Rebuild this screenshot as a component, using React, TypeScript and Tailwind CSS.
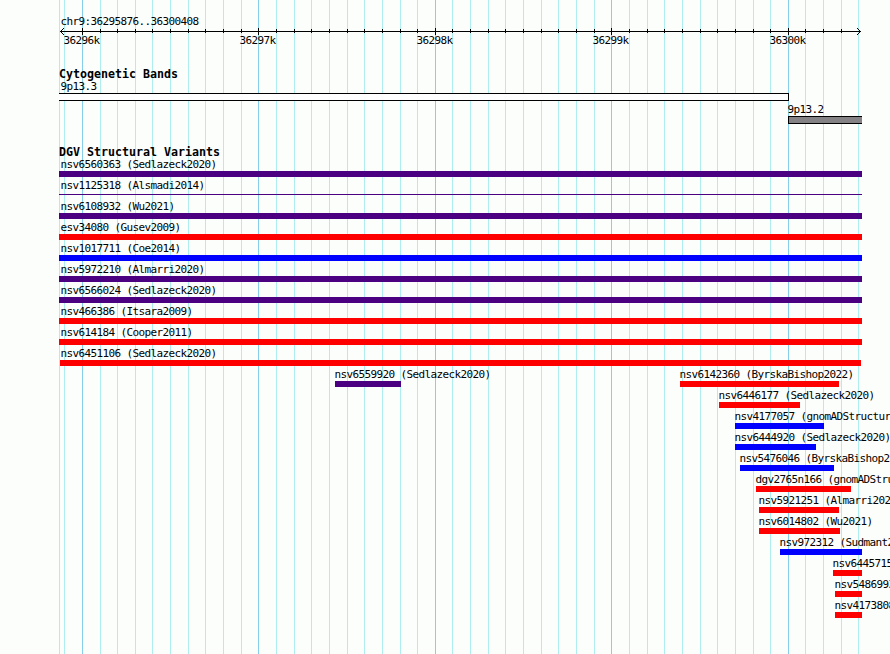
const LEFT = 59;
const RIGHT = 862;

const MAJOR = [82, 258, 435, 611, 788];
const MINOR = [
  64, 100, 117, 135, 152, 170, 188, 205, 223, 241,
  276, 294, 311, 329, 347, 364, 382, 400, 417,
  452, 470, 488, 505, 523, 541, 558, 576, 594,
  629, 647, 664, 682, 700, 717, 735, 753, 770,
  805, 823, 841, 858,
];

const TICK_LABELS = [
  { x: 64, text: "36296k" },
  { x: 240, text: "36297k" },
  { x: 417, text: "36298k" },
  { x: 593, text: "36299k" },
  { x: 770, text: "36300k" },
];

type Kind = "gain" | "loss" | "complex";

interface Variant {
  name: string;
  kind: Kind;
  start?: number;
  end?: number;
  thin?: boolean;
}

const COLORS: Record<Kind, string> = {
  gain: "bg-[#0000ff]",
  loss: "bg-[#ff0000]",
  complex: "bg-[#4b0082]",
};

// One entry per track row; variants that don't collide share a row
const ROWS: Variant[][] = [
  [{ name: "nsv6560363 (Sedlazeck2020)", kind: "complex" }],
  [{ name: "nsv1125318 (Alsmadi2014)", kind: "complex", thin: true }],
  [{ name: "nsv6108932 (Wu2021)", kind: "complex" }],
  [{ name: "esv34080 (Gusev2009)", kind: "loss" }],
  [{ name: "nsv1017711 (Coe2014)", kind: "gain" }],
  [{ name: "nsv5972210 (Almarri2020)", kind: "complex" }],
  [{ name: "nsv6566024 (Sedlazeck2020)", kind: "complex" }],
  [{ name: "nsv466386 (Itsara2009)", kind: "loss" }],
  [{ name: "nsv614184 (Cooper2011)", kind: "loss" }],
  [{ name: "nsv6451106 (Sedlazeck2020)", kind: "loss", start: 60, end: 861 }],
  [
    { name: "nsv6559920 (Sedlazeck2020)", kind: "complex", start: 335, end: 401 },
    { name: "nsv6142360 (ByrskaBishop2022)", kind: "loss", start: 680, end: 839 },
  ],
  [{ name: "nsv6446177 (Sedlazeck2020)", kind: "loss", start: 719, end: 800 }],
  [{ name: "nsv4177057 (gnomADStructur", kind: "gain", start: 735, end: 824 }],
  [{ name: "nsv6444920 (Sedlazeck2020)", kind: "gain", start: 735, end: 816 }],
  [{ name: "nsv5476046 (ByrskaBishop2", kind: "gain", start: 740, end: 834 }],
  [{ name: "dgv2765n166 (gnomADStru", kind: "loss", start: 756, end: 851 }],
  [{ name: "nsv5921251 (Almarri202", kind: "loss", start: 759, end: 839 }],
  [{ name: "nsv6014802 (Wu2021)", kind: "loss", start: 759, end: 840 }],
  [{ name: "nsv972312 (Sudmant2", kind: "gain", start: 780, end: 862 }],
  [{ name: "nsv6445715", kind: "loss", start: 833, end: 862 }],
  [{ name: "nsv5486993", kind: "loss", start: 835, end: 862 }],
  [{ name: "nsv4173808", kind: "loss", start: 835, end: 862 }],
];

function Grid() {
  return (
    <svg className="absolute inset-0" width="890" height="654" shapeRendering="crispEdges">
      {[LEFT, ...MINOR].map((x) => (
        <rect key={x} x={x} y="0" width="1" height="654" fill="#afeeee" />
      ))}
      {MAJOR.map((x) => (
        <rect key={x} x={x} y="0" width="1" height="654" fill="#87ceeb" />
      ))}
    </svg>
  );
}

function Ruler() {
  return (
    <svg className="block shrink-0" width="890" height="40">
      <g shapeRendering="crispEdges">
        <rect x="60" y="3" width="801" height="1" />
        {MINOR.filter((x) => x > LEFT + 10 && x < 850).map((x) => (
          <rect key={x} x={x} y="1" width="1" height="4" />
        ))}
        {MAJOR.map((x) => (
          <rect key={x} x={x} y="0" width="1" height="7" />
        ))}
        {/* arrow heads */}
        {[1, 2, 3].map((i) => (
          <g key={i}>
            <rect x={60 + i} y={3 - i} width="1" height="1" />
            <rect x={60 + i} y={3 + i} width="1" height="1" />
            <rect x={860 - i} y={3 - i} width="1" height="1" />
            <rect x={860 - i} y={3 + i} width="1" height="1" />
          </g>
        ))}
      </g>
      {TICK_LABELS.map((t) => (
        <text key={t.text} x={t.x - 0.5} y="16">
          {t.text}
        </text>
      ))}
    </svg>
  );
}

function Heading({ children }: { children: string }) {
  return (
    <h2 className="ml-[59px] h-3 text-[11.63px] leading-3 font-bold tracking-normal">{children}</h2>
  );
}

function VariantItem({ name, kind, start = LEFT, end = RIGHT, thin }: Variant) {
  const labelX = Math.max(start - 0.5, 60.5);

  return (
    <div className="flex flex-col [grid-area:1/1]">
      <span className="h-3 pt-px" style={{ marginLeft: labelX }}>
        {name}
      </span>
      <div
        className={`${COLORS[kind]} ${thin ? "mt-[3px] h-px" : "mt-px h-1.5"}`}
        style={{ marginLeft: start, width: end - start }}
      />
    </div>
  );
}

export default function App() {
  return (
    <main className="relative h-[654px] w-[890px] overflow-hidden bg-[#fcfefc] font-['DejaVu_Sans_Mono',monospace] text-[11px] leading-3 tracking-[-0.622px] whitespace-nowrap text-black">
      <Grid />

      <div className="relative flex flex-col pt-4">
        <div className="ml-[60.5px] h-3">chr9:36295876..36300408</div>
        <Ruler />

        <section>
          <Heading>Cytogenetic Bands</Heading>
          <div className="ml-[60.5px] h-3 pt-px">9p13.3</div>
          <div className="mt-px ml-[59px] h-2 w-[730px] border-y border-r border-black bg-white" />
          <div className="mt-0.5 ml-[787.5px] h-3 pt-px">9p13.2</div>
          <div className="mt-px ml-[788px] h-2 w-[74px] border-y border-l border-black bg-[#848284]" />
        </section>

        <section className="mt-[22px]">
          <Heading>DGV Structural Variants</Heading>
          <ul>
            {ROWS.map((row) => (
              <li key={row[0].name} className="grid h-[21px] grid-cols-[890px]">
                {row.map((v) => (
                  <VariantItem key={v.name} {...v} />
                ))}
              </li>
            ))}
          </ul>
        </section>
      </div>
    </main>
  );
}
